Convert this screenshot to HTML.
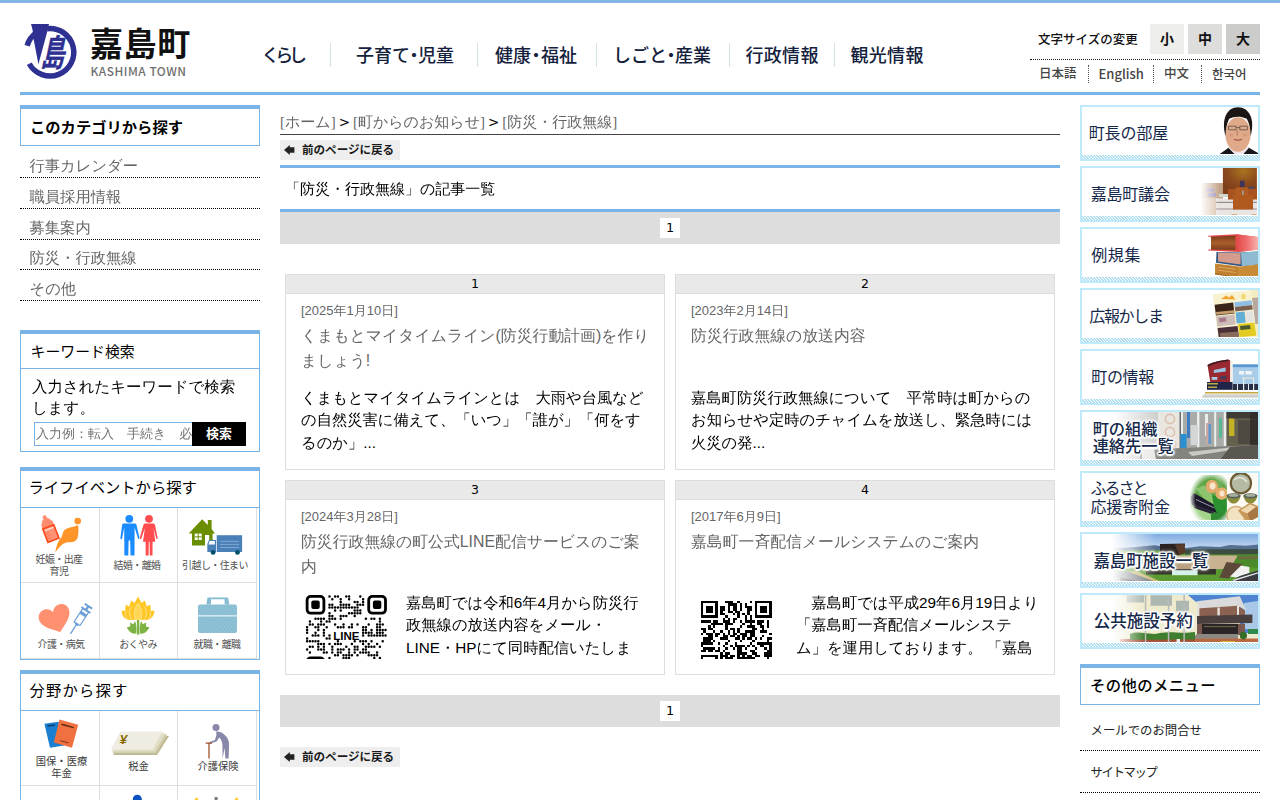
<!DOCTYPE html>
<html lang="ja">
<head>
<meta charset="utf-8">
<title>「防災・行政無線」の記事一覧 | 嘉島町</title>
<style>
*{box-sizing:border-box}
html,body{margin:0;padding:0;background:#fff}
body{width:1280px;height:800px;overflow:hidden;position:relative;color:#000;
 font-family:"DejaVu Sans","WenQuanYi Zen Hei",sans-serif;font-size:16px}
.abs{position:absolute}
.noto{font-family:"Liberation Sans","Noto Sans CJK JP",sans-serif}
.wqy{font-family:"Liberation Sans","WenQuanYi Zen Hei",sans-serif}
a{color:inherit;text-decoration:none}
#topbar{left:0;top:0;width:1280px;height:3px;background:#82b6e8}
#hline{left:20px;top:92px;width:1240px;height:3px;background:#7ab4e6}
/* header */
#sitename{left:90px;top:21px;font-size:33px;font-weight:700;line-height:48px;letter-spacing:0.6px;white-space:nowrap;color:#111}
#siteen{left:90.6px;top:62.8px;font-size:11.9px;line-height:16px;color:#707070;white-space:nowrap;letter-spacing:.5px}
.nav{top:42px;height:28px;line-height:28px;font-size:18px;color:#14213d;white-space:nowrap;font-weight:500}
.nsep{top:43px;width:1px;height:24px;background:#d3e3e3}
#fs-label{left:1038px;top:31px;font-size:12.5px;line-height:18px;white-space:nowrap;font-weight:500;color:#111}
.fsb{top:24px;width:34px;height:30px;line-height:31px;text-align:center;font-size:14px;font-weight:700;color:#111}
#fsdot{left:1030px;top:59px;width:230px;border-top:1px dotted #222}
.lang{top:65px;height:18px;line-height:18px;font-size:12.5px;color:#444;white-space:nowrap;font-weight:500}
.lsep{top:65px;height:18px;border-left:1px dotted #555}
/* boxes */
.box{border:1px solid #7ab4e6;border-top:4px solid #7ab4e6;background:#fff}
.boxtitle{font-size:15.3px;line-height:20px;white-space:nowrap;color:#000}
.sideitem{left:20px;width:240px;height:31px;border-bottom:1px dotted #000;color:#666;font-size:15.3px;line-height:20px;padding:9px 0 0 9.5px;white-space:nowrap}

.grid{left:21px;width:236px;height:151px;
 background:
  linear-gradient(#ddd,#ddd) 78px 0/1px 100% no-repeat,
  linear-gradient(#ddd,#ddd) 156px 0/1px 100% no-repeat,
  linear-gradient(#ddd,#ddd) 235px 0/1px 100% no-repeat,
  linear-gradient(#ddd,#ddd) 0 74px/236px 1px no-repeat,
  linear-gradient(#ddd,#ddd) 0 150px/236px 1px no-repeat}
.ilabel{font-size:10px;line-height:12px;color:#505050;font-weight:400;text-align:center;width:78px;white-space:nowrap;letter-spacing:-0.6px}
.ilabel2{font-size:10.3px;line-height:12px;color:#3a3a3a;font-weight:400;text-align:center;width:78px;white-space:nowrap}

.bc{font-family:"Liberation Serif","WenQuanYi Zen Hei",serif;font-size:15px;line-height:22px;color:#666;border-bottom:1px solid #444;white-space:nowrap}
.bc .gt{font-family:"DejaVu Sans",sans-serif;color:#000;font-size:13.5px;display:inline-block;width:17.2px;text-align:center;white-space:pre}
.backbtn{left:280px;width:120px;height:20px;background:#eee;font-size:11.55px;font-weight:700;line-height:20.6px;padding-left:22px;white-space:nowrap;color:#1a1a1a}
.pager{left:280px;width:780px;height:32px;background:#ddd}
.pager span{position:absolute;left:380px;top:6px;width:20px;height:20px;background:#fff;text-align:center;font-family:"DejaVu Sans",sans-serif;font-size:12.8px;line-height:20px}
.card{width:380px;border:1px solid #ddd;background:#fff;overflow:hidden}
.ch{position:absolute;left:0;top:0;width:378px;height:19px;background:#e9e9e9;border-bottom:1px solid #ddd;text-align:center;font-family:"DejaVu Sans",sans-serif;font-size:12.5px;line-height:17px}
.cd{position:absolute;left:15px;top:27.5px;font-size:13px;line-height:16px;color:#666;white-space:nowrap}
.ct{position:absolute;left:15px;top:49px;width:351px;font-size:15.85px;line-height:24.6px;color:#666}
.cb{position:absolute;left:15px;width:351px;font-size:15.3px;line-height:22.6px;color:#000;top:111.5px}

.bn{left:1080px;width:180px;height:56px;border:2px solid #bfeafb;background:#fff;overflow:hidden}
.bp{position:absolute;left:0;top:0}
.hatch{position:absolute;left:0;top:48px;width:176px;height:4px;background:repeating-linear-gradient(45deg,#b2dff0 0,#b2dff0 1.06px,#fff 1.06px,#fff 2.12px)}
.bt{position:absolute;font-family:"Liberation Sans","Noto Sans CJK JP",sans-serif;font-size:16px;line-height:20px;color:#16284a;white-space:nowrap;letter-spacing:-.1px}
.glow{text-shadow:1.5px 0 1px #fff,-1.5px 0 1px #fff,0 1.5px 1px #fff,0 -1.5px 1px #fff,1.2px 1.2px 1px #fff,-1.2px -1.2px 1px #fff,1.2px -1.2px 1px #fff,-1.2px 1.2px 1px #fff,0 0 3px #fff,0 0 4px #fff,0 0 5px #fff}
.om{left:1080px;width:180px;height:42px;border-bottom:1px dotted #000;font-size:12.4px;line-height:18px;color:#222;padding:13px 0 0 10.5px;white-space:nowrap}
</style>
</head>
<body>
<div id="topbar" class="abs"></div>

<!-- HEADER -->
<svg class="abs" style="left:0;top:0" width="100" height="92" viewBox="0 0 100 92">
 <path d="M 47.11 28.68 A 23.75 23.75 0 1 1 29.23 63.76" fill="none" stroke="#2e3192" stroke-width="5.5"/>
 <path d="M 27.17 45.70 A 23.75 23.75 0 0 1 36.72 32.56" fill="none" stroke="#2e3192" stroke-width="5.5"/>
 <path d="M31 23.9 L49 23.9 L47.3 31.5 L38.4 64.3 L33.4 38 L32.6 30 Z" fill="#2e3192"/>
 <text transform="translate(40.4 66.2) skewX(-12) scale(0.76 1.17)" font-family="'Liberation Sans','Noto Sans CJK JP',sans-serif" font-weight="700" font-size="31" fill="#2e3192" stroke="#2e3192" stroke-width=".35">島</text>
</svg>
<div id="sitename" class="abs noto">嘉島町</div>
<div id="siteen" class="abs" style="font-family:'Noto Sans CJK JP',sans-serif;font-weight:500">KASHIMA TOWN</div>

<div class="abs nav noto" style="left:261.5px;letter-spacing:-4.3px">くらし</div>
<div class="abs nsep" style="left:330px"></div>
<div class="abs nav noto" style="left:356px">子育て<span style="margin:0 -5px">・</span>児童</div>
<div class="abs nsep" style="left:477px"></div>
<div class="abs nav noto" style="left:495px">健康<span style="margin:0 -4px">・</span>福祉</div>
<div class="abs nsep" style="left:596px"></div>
<div class="abs nav noto" style="left:613px">しごと<span style="margin:0 -5px">・</span>産業</div>
<div class="abs nsep" style="left:729px"></div>
<div class="abs nav noto" style="left:745.5px;letter-spacing:.3px">行政情報</div>
<div class="abs nsep" style="left:834px"></div>
<div class="abs nav noto" style="left:850.5px;letter-spacing:.3px">観光情報</div>

<div id="fs-label" class="abs noto">文字サイズの変更</div>
<div class="abs fsb noto" style="left:1150px;background:#eeeeec">小</div>
<div class="abs fsb noto" style="left:1188px;background:#dddddb">中</div>
<div class="abs fsb noto" style="left:1226px;background:#ccccca">大</div>
<div id="fsdot" class="abs"></div>
<div class="abs lang noto" style="left:1039px">日本語</div>
<div class="abs lsep" style="left:1088px"></div>
<div class="abs lang" style="left:1098.5px;font-family:'Noto Sans CJK JP',sans-serif;font-size:13px">English</div>
<div class="abs lsep" style="left:1153px"></div>
<div class="abs lang noto" style="left:1164px">中文</div>
<div class="abs lsep" style="left:1201px"></div>
<div class="abs lang" style="left:1212px;font-family:'Noto Sans CJK KR','NanumGothic',sans-serif;font-size:12.5px">한국어</div>
<div id="hline" class="abs"></div>

<!-- LEFT -->
<!--LEFT-START-->
<div class="abs box" style="left:20px;top:105px;width:240px;height:41px"></div>
<div class="abs boxtitle noto" style="left:30px;top:117.5px;font-weight:700">このカテゴリから探す</div>
<div class="abs sideitem wqy" style="top:147px">行事カレンダー</div>
<div class="abs sideitem wqy" style="top:178px">職員採用情報</div>
<div class="abs sideitem wqy" style="top:209px">募集案内</div>
<div class="abs sideitem wqy" style="top:239px">防災・行政無線</div>
<div class="abs sideitem wqy" style="top:270px">その他</div>

<div class="abs box" style="left:20px;top:330px;width:240px;height:122px"></div>
<div class="abs" style="left:21px;top:368px;width:238px;height:1px;background:#7ab4e6"></div>
<div class="abs boxtitle noto" style="left:30.5px;top:341.5px;font-weight:400;font-size:14.9px">キーワード検索</div>
<div class="abs wqy" style="left:32px;top:376px;width:215px;font-size:15.45px;line-height:21px">入力されたキーワードで検索します。</div>
<div class="abs wqy" style="left:34px;top:422px;width:159px;height:24px;border:1px solid #7ab4e6;font-size:13px;line-height:22px;color:#707070;padding-left:1px;white-space:nowrap;overflow:hidden">入力例：転入　手続き　必要なもの</div>
<div class="abs noto" style="left:192px;top:422px;width:54px;height:24px;background:#000;color:#fff;font-size:13px;font-weight:700;line-height:23px;text-align:center">検索</div>

<div class="abs box" style="left:20px;top:467px;width:240px;height:193px"></div>
<div class="abs" style="left:21px;top:507px;width:238px;height:1px;background:#7ab4e6"></div>
<div class="abs boxtitle noto" style="left:28.5px;top:478px;font-weight:400">ライフイベントから探す</div>
<div class="abs grid" style="top:508px"></div>
<svg class="abs" style="left:21px;top:508px" width="236" height="150" viewBox="21 508 236 150">
 <!-- bottle -->
 <g transform="rotate(-21 49.5 530)">
  <circle cx="49.5" cy="516.6" r="2.1" fill="#ff8c6e"/>
  <path d="M46.8 518 L52.2 518 L55.6 523 L55.6 526.6 L43.4 526.6 L43.4 523 Z" fill="#ff8c6e"/>
  <rect x="43.6" y="526.6" width="11.8" height="14.4" fill="#ff9175" stroke="#ff4a1a" stroke-width="1.6"/>
  <rect x="45" y="528.2" width="9" height="1.5" fill="#ffe3da"/>
  <path d="M45 532.5h3M45 535h3M45 537.5h3" stroke="#ff6a40" stroke-width=".7"/>
 </g>
 <!-- swirl -->
 <circle cx="77.7" cy="521.1" r="3.3" fill="#ff9428"/>
 <path d="M76.3 525.6 L78.3 525.8 C78.6 530 78.6 534 77.4 538.5 C76 541.5 72.5 542.5 69.5 542.3 C64.5 542.2 61.5 544 55.2 552.6 C56.2 547 57.6 542.5 59.4 539.8 C60.8 538 62 537 62.2 535.3 C62.8 532 64 530 66.2 528.8 C69 527.3 72.5 527.8 76.3 525.6 Z" fill="#ff9428"/>
 <!-- man -->
 <g fill="#1a8cff">
  <circle cx="129.3" cy="518.8" r="3.9"/>
  <path d="M123.2 523.5 L135.4 523.5 L136.4 524.6 L139.6 538.4 L138.2 539 L134.6 527.5 L134.5 555.4 L130.5 555.4 L130.2 540.5 L128.6 540.5 L128.3 555.4 L124.4 555.4 L124.2 527.5 L121.9 539.2 L120.3 538.8 L122.2 524.6 Z"/>
 </g>
 <!-- woman -->
 <g fill="#ff4d4f">
  <circle cx="149" cy="518.8" r="3.9"/>
  <path d="M144.6 523.5 L153.8 523.5 L154.9 524.6 L157.8 538.6 L156.4 539.1 L153.5 528 L155.3 541.8 L152.6 541.8 L152.5 555.4 L149.8 555.4 L149.6 541.8 L148.8 541.8 L148.6 555.4 L145.7 555.4 L145.6 541.8 L143 541.8 L144.9 528 L141.2 539 L139.7 538.4 L143.5 524.6 Z"/>
 </g>
 <!-- house -->
 <g fill="#6b8e00">
  <path d="M202.2 519.2 L207.8 524.9 L207.8 520 L211.6 520 L211.6 528.9 L215 533.4 L212.6 533.4 L212.6 545.4 L209.2 545.4 L209.2 535 L205 535 L205 545.4 L192 545.4 L192 533.4 L188.7 533.4 Z"/>
 </g>
 <rect x="194.7" y="533.6" width="7" height="6.4" fill="#fff"/>
 <path d="M198.2 533.6v6.4M194.7 536.8h7" stroke="#6b8e00" stroke-width="1"/>
 <!-- truck -->
 <rect x="216.7" y="535.2" width="25.4" height="16.8" fill="#4a80b8"/>
 <path d="M209 540 L216 540 L216 552 L207.3 552 L207.3 544 Z" fill="#4a80b8"/>
 <path d="M209.6 540.9 L214.8 540.9 L214.8 544.6 L208.5 544.6 Z" fill="#fff"/>
 <path d="M220 541.3h19M220 544.4h19M220 547.5h19" stroke="#8fb3d9" stroke-width=".8"/>
 <circle cx="213.1" cy="552.4" r="2.4" fill="#00506a"/><circle cx="237.5" cy="552.4" r="2.4" fill="#00506a"/>
 <!-- heart -->
 <path transform="translate(55.8 619.6) rotate(-20) scale(1.02 .98)" d="M0 13.6 C-5 9 -15.5 3 -15.5 -5 C-15.5 -10.5 -11.5 -13.5 -7.6 -13.5 C-4 -13.5 -1.2 -11 0 -8.2 C1.2 -11 4 -13.5 7.6 -13.5 C11.5 -13.5 15.5 -10.5 15.5 -5 C15.5 3 5 9 0 13.6 Z" fill="#ff9070"/>
 <!-- syringe -->
 <g transform="translate(79.7 619.6) rotate(33)" stroke="#6b9fd8" fill="none">
  <path d="M-4.4 -16h8.8" stroke-width="2"/>
  <path d="M0 -15.5v4" stroke-width="2.4"/>
  <path d="M-5.4 -11.4h10.8" stroke-width="1.8"/>
  <rect x="-3.5" y="-10.8" width="7" height="15.6" stroke-width="1.2" fill="#fff"/>
  <rect x="-3.5" y="-8.2" width="7" height="3.2" fill="#6b9fd8" stroke="none"/>
  <path d="M-2 4.8h4v1.8h-4z" fill="#6b9fd8" stroke="none"/>
  <path d="M0 6.4v10.6" stroke-width="1.3"/>
 </g>
 <!-- lotus -->
 <g>
  <path d="M138 596.5 L141.5 603 L145 600.5 L146.6 606.5 L150.3 604.5 L150.8 611 L154.3 610.5 C154.6 616 151 619.8 146 620 L130 620 C125 619.8 121.4 616 121.7 610.5 L125.2 611 L125.7 604.5 L129.4 606.5 L131 600.5 L134.5 603 Z" fill="#ffc726"/>
  <path d="M138 603 C142 608 142.6 615 140.8 620 L135.2 620 C133.4 615 134 608 138 603 Z" fill="#ffd655" stroke="#fff3c4" stroke-width=".5"/>
  <path d="M131.3 607 C128.5 612 129.5 617 132.3 620 M144.7 607 C147.5 612 146.5 617 143.7 620 M126 611.5 C124.8 615 126 618 128 619.6 M150 611.5 C151.2 615 150 618 148 619.6" stroke="#fff3c4" stroke-width=".6" fill="none"/>
  <rect x="136.9" y="620" width="2.4" height="14.6" fill="#7cb342"/>
  <path d="M136.3 633.6 C131 634.5 128.5 630.5 126.7 627.3 L130.3 626.6 L130 622.5 L133.4 624.3 L135 621 C136.6 624.5 136.8 629 136.3 633.6 Z M139.9 633.6 C145.2 634.5 147.7 630.5 149.5 627.3 L145.9 626.6 L146.2 622.5 L142.8 624.3 L141.2 621 C139.6 624.5 139.4 629 139.9 633.6 Z" fill="#7cb342"/>
 </g>
 <!-- briefcase -->
 <path d="M207.5 597.4 L228 597.4 L229.4 604.6 L224.6 604.6 L224.6 599.3 L211 599.3 L211 604.6 L206.3 604.6 Z" fill="#86bcd1"/>
 <defs><pattern id="bh" width="2.6" height="2.6" patternUnits="userSpaceOnUse" patternTransform="rotate(-55)"><rect width="2.6" height="2.6" fill="#86bcd1"/><rect width="2.6" height=".7" fill="#9cc9da"/></pattern></defs>
 <rect x="198" y="604.5" width="39" height="28.6" rx="2" fill="url(#bh)"/>
 <path d="M198 615.9h39" stroke="#fff" stroke-width="1"/>
</svg>
<div class="abs ilabel noto" style="left:20px;top:553.5px">妊娠・出産<br>育児</div>
<div class="abs ilabel noto" style="left:98px;top:559.5px">結婚・離婚</div>
<div class="abs ilabel noto" style="left:176px;top:559.5px">引越し・住まい</div>
<div class="abs ilabel noto" style="left:22px;top:638.5px">介護・病気</div>
<div class="abs ilabel noto" style="left:99px;top:638.5px">おくやみ</div>
<div class="abs ilabel noto" style="left:178px;top:638.5px">就職・離職</div>

<div class="abs box" style="left:20px;top:670px;width:240px;height:140px;border-bottom:0"></div>
<div class="abs" style="left:21px;top:710px;width:238px;height:1px;background:#7ab4e6"></div>
<div class="abs boxtitle noto" style="left:29.5px;top:681px;font-weight:400;letter-spacing:1.2px">分野から探す</div>
<div class="abs grid" style="top:711px"></div>
<svg class="abs" style="left:21px;top:711px" width="236" height="89" viewBox="21 711 236 89">
 <path d="M44.4 723.8 L58.6 721.8 L64 745.6 L50 747.8 Z" fill="#1a7fd0"/>
 <path d="M59.4 719.6 L78.2 724.7 L72 747.8 L53.8 742.6 Z" fill="#f07040"/>
 <path d="M61.5 724.3 L73.6 727.6" stroke="#5a2a10" stroke-width="1.5"/>
 <path d="M60.2 740.6 L68.6 742.9" stroke="#7a3a18" stroke-width="1"/>
 <path d="M47.5 726 L55 725" stroke="#0a3f70" stroke-width="1.4"/>
 <!-- money -->
 <path d="M124 736 L169 736 L157 755 L113 755 Z" fill="#bdb88f"/>
 <path d="M123 734.5 L167.5 734.5 L156 753.2 L112.5 753.2 Z" fill="#d3cfae"/>
 <path d="M122 733 L165.5 733 L154.6 751.6 L111.6 751.6 Z" fill="#e2dfc8"/>
 <path d="M120.4 731.4 L162.5 731.4 L152.4 749.8 L110.8 749.8 Z" fill="#efece2"/>
 <text x="119.5" y="744" font-family="'Liberation Sans',sans-serif" font-weight="700" font-style="italic" font-size="13.5" fill="#8a6a00">¥</text>
 <!-- elderly -->
 <g fill="#8888aa">
  <circle cx="216" cy="727.4" r="3.5"/>
  <path d="M216.2 731.6 C219.5 731 224 733 227 737.5 C229.2 740.8 229.2 744 229 747 L228.6 758.6 L225.4 758.6 L224.6 748 L222.6 758.6 L222.4 744.5 C222.2 741.5 221 739 219.2 737.4 L216.6 741.6 L210 743.4 L209.6 742 L215 740 L216.4 735 Z"/>
 </g>
 <path d="M205.7 743.1h6.3" stroke="#a0522d" stroke-width="1.3"/>
 <path d="M209 743v15.5" stroke="#a0522d" stroke-width="1.3"/>
 <!-- row2 hints -->
 <circle cx="137.3" cy="799.2" r="4.5" fill="#0a50c0"/>
 <path d="M194.5 800 L196.5 797 L198.5 800 Z M234.6 800 L236.6 797 L238.6 800 Z" fill="#ffc726"/>
 <rect x="214.6" y="797" width="3" height="3" fill="#777"/>
</svg>
<div class="abs ilabel2 noto" style="left:22.5px;top:755.5px">国保・医療<br>年金</div>
<div class="abs ilabel2 noto" style="left:99.5px;top:760.5px">税金</div>
<div class="abs ilabel2 noto" style="left:179px;top:760.5px">介護保険</div>
<!--LEFT-END-->

<!-- MAIN -->
<!--MAIN-START-->
<div class="abs bc" style="left:280px;top:111px;width:780px;height:24px">[ホーム]<span class="gt">&gt;</span>[町からのお知らせ]<span class="gt">&gt;</span>[防災・行政無線]</div>
<div class="abs backbtn noto" style="top:140px"><svg width="11" height="10" viewBox="0 0 11 10" style="position:absolute;left:4.4px;top:5px"><path d="M0 5 L5.8 0 L5.8 2.2 L10.4 2.2 L10.4 7.8 L5.8 7.8 L5.8 10 Z" fill="#222"/></svg>前のページに戻る</div>
<div class="abs" style="left:280px;top:165px;width:780px;height:3px;background:#7ab4e6"></div>
<div class="abs wqy" style="left:285px;top:179px;font-size:15px;line-height:20px;white-space:nowrap">「防災・行政無線」の記事一覧</div>
<div class="abs" style="left:280px;top:209px;width:780px;height:3px;background:#7ab4e6"></div>
<div class="abs pager" style="top:212px"><span>1</span></div>

<div class="abs card" style="left:285px;top:274px;height:196px"><div class="ch">1</div>
 <div class="cd wqy">[2025年1月10日]</div>
 <div class="ct wqy">くまもとマイタイムライン(防災行動計画)を作りましょう!</div>
 <div class="cb wqy">くまもとマイタイムラインとは　大雨や台風などの自然災害に備えて、「いつ」「誰が」「何をするのか」...</div>
</div>
<div class="abs card" style="left:675px;top:274px;height:196px"><div class="ch">2</div>
 <div class="cd wqy">[2023年2月14日]</div>
 <div class="ct wqy">防災行政無線の放送内容</div>
 <div class="cb wqy">嘉島町防災行政無線について　平常時は町からのお知らせや定時のチャイムを放送し、緊急時には火災の発...</div>
</div>
<div class="abs card" style="left:285px;top:480px;height:195px"><div class="ch">3</div>
 <div class="cd wqy">[2024年3月28日]</div>
 <div class="ct wqy">防災行政無線の町公式LINE配信サービスのご案内</div>
 <svg style="position:absolute;left:19px;top:114px" width="83" height="64" viewBox="-0.7 0 83 64"><path d="M23.8 1.4h0M29.4 1.4h0M32.2 1.4h0M40.6 1.4h0M43.4 1.4h0M54.6 1.4h0M26.6 4.2h0M35 4.2h0M43.4 4.2h0M57.4 4.2h0M35 7h0M49 7h0M51.8 7h0M57.4 7h0M23.8 9.8h0M26.6 9.8h0M35 9.8h0M37.8 9.8h0M40.6 9.8h0M43.4 9.8h0M51.8 9.8h0M54.6 9.8h0M57.4 9.8h0M23.8 12.6h0M26.6 12.6h0M29.4 12.6h0M32.2 12.6h0M35 12.6h0M37.8 12.6h0M40.6 12.6h0M43.4 12.6h0M46.2 12.6h0M49 12.6h0M51.8 12.6h0M29.4 15.4h0M35 15.4h0M49 15.4h0M51.8 15.4h0M54.6 15.4h0M23.8 18.2h0M43.4 18.2h0M46.2 18.2h0M49 18.2h0M51.8 18.2h0M54.6 18.2h0M23.8 21h0M26.6 21h0M35 21h0M37.8 21h0M40.6 21h0M49 21h0M9.8 23.8h0M12.6 23.8h0M15.4 23.8h0M18.2 23.8h0M23.8 23.8h0M26.6 23.8h0M29.4 23.8h0M35 23.8h0M60.2 23.8h0M65.8 23.8h0M68.6 23.8h0M74.2 23.8h0M4.2 26.6h0M15.4 26.6h0M21 26.6h0M23.8 26.6h0M74.2 26.6h0M4.2 29.4h0M7 29.4h0M12.6 29.4h0M15.4 29.4h0M18.2 29.4h0M29.4 29.4h0M37.8 29.4h0M46.2 29.4h0M51.8 29.4h0M63 29.4h0M71.4 29.4h0M74.2 29.4h0M77 29.4h0M1.4 32.2h0M9.8 32.2h0M12.6 32.2h0M21 32.2h0M32.2 32.2h0M35 32.2h0M37.8 32.2h0M43.4 32.2h0M46.2 32.2h0M57.4 32.2h0M60.2 32.2h0M71.4 32.2h0M74.2 32.2h0M1.4 35h0M12.6 35h0M18.2 35h0M57.4 35h0M60.2 35h0M65.8 35h0M71.4 35h0M74.2 35h0M77 35h0M79.8 35h0M1.4 37.8h0M9.8 37.8h0M18.2 37.8h0M57.4 37.8h0M60.2 37.8h0M63 37.8h0M65.8 37.8h0M71.4 37.8h0M74.2 37.8h0M77 37.8h0M7 40.6h0M9.8 40.6h0M12.6 40.6h0M18.2 40.6h0M23.8 40.6h0M57.4 40.6h0M63 40.6h0M65.8 40.6h0M68.6 40.6h0M71.4 40.6h0M74.2 40.6h0M77 40.6h0M79.8 40.6h0M1.4 43.4h0M21 43.4h0M23.8 43.4h0M1.4 46.2h0M4.2 46.2h0M7 46.2h0M9.8 46.2h0M12.6 46.2h0M32.2 46.2h0M49 46.2h0M54.6 46.2h0M57.4 46.2h0M60.2 46.2h0M65.8 46.2h0M77 46.2h0M12.6 49h0M15.4 49h0M18.2 49h0M23.8 49h0M29.4 49h0M32.2 49h0M35 49h0M46.2 49h0M57.4 49h0M63 49h0M71.4 49h0M4.2 51.8h0M7 51.8h0M12.6 51.8h0M18.2 51.8h0M26.6 51.8h0M40.6 51.8h0M49 51.8h0M51.8 51.8h0M60.2 51.8h0M63 51.8h0M65.8 51.8h0M68.6 51.8h0M74.2 51.8h0M1.4 54.6h0M12.6 54.6h0M15.4 54.6h0M18.2 54.6h0M26.6 54.6h0M32.2 54.6h0M35 54.6h0M37.8 54.6h0M43.4 54.6h0M49 54.6h0M51.8 54.6h0M57.4 54.6h0M60.2 54.6h0M4.2 57.4h0M18.2 57.4h0M21 57.4h0M26.6 57.4h0M32.2 57.4h0M35 57.4h0M43.4 57.4h0M49 57.4h0M54.6 57.4h0M57.4 57.4h0M60.2 57.4h0M63 57.4h0M71.4 57.4h0M29.4 60.2h0M32.2 60.2h0M37.8 60.2h0M40.6 60.2h0M43.4 60.2h0M46.2 60.2h0M51.8 60.2h0M63 60.2h0M65.8 60.2h0M68.6 60.2h0M71.4 60.2h0M23.8 63h0M37.8 63h0M40.6 63h0M43.4 63h0M68.6 63h0M74.2 63h0M26.6 65.8h0M29.4 65.8h0M35 65.8h0M37.8 65.8h0M54.6 65.8h0M57.4 65.8h0M65.8 65.8h0M68.6 65.8h0M79.8 65.8h0M32.2 68.6h0M37.8 68.6h0M43.4 68.6h0M46.2 68.6h0M51.8 68.6h0M60.2 68.6h0M63 68.6h0M65.8 68.6h0M74.2 68.6h0M77 68.6h0M79.8 68.6h0M29.4 71.4h0M32.2 71.4h0M40.6 71.4h0M46.2 71.4h0M49 71.4h0M51.8 71.4h0M54.6 71.4h0M57.4 71.4h0M60.2 71.4h0M63 71.4h0M68.6 71.4h0M74.2 71.4h0M77 71.4h0M26.6 74.2h0M29.4 74.2h0M37.8 74.2h0M40.6 74.2h0M43.4 74.2h0M49 74.2h0M57.4 74.2h0M60.2 74.2h0M68.6 74.2h0M74.2 74.2h0M77 74.2h0M79.8 74.2h0M26.6 77h0M29.4 77h0M40.6 77h0M57.4 77h0M60.2 77h0M63 77h0M68.6 77h0M71.4 77h0M77 77h0M79.8 77h0M23.8 79.8h0M35 79.8h0M37.8 79.8h0M54.6 79.8h0M60.2 79.8h0M65.8 79.8h0M71.4 79.8h0M74.2 79.8h0M77 79.8h0M79.8 79.8h0" stroke="#000" stroke-width="2.5" stroke-linecap="round" fill="none"/><rect x="1.4" y="1.4" width="16.8" height="16.8" rx="3.6" fill="none" stroke="#000" stroke-width="2.8"/><rect x="5.6" y="5.6" width="8.4" height="8.4" rx="2" fill="#000"/><rect x="63.0" y="1.4" width="16.8" height="16.8" rx="3.6" fill="none" stroke="#000" stroke-width="2.8"/><rect x="67.2" y="5.6" width="8.4" height="8.4" rx="2" fill="#000"/><rect x="1.4" y="63.0" width="16.8" height="16.8" rx="3.6" fill="none" stroke="#000" stroke-width="2.8"/><rect x="5.6" y="67.2" width="8.4" height="8.4" rx="2" fill="#000"/><text x="40.6" y="45.2" text-anchor="middle" font-family="'Liberation Sans',sans-serif" font-weight="700" font-size="11.5" fill="#000">LINE</text></svg>
 <div class="cb wqy" style="left:120px;width:246px;top:110.5px">嘉島町では令和6年4月から防災行政無線の放送内容をメール・LINE・HPにて同時配信いたしま</div>
</div>
<div class="abs card" style="left:675px;top:480px;height:195px"><div class="ch">4</div>
 <div class="cd wqy">[2017年6月9日]</div>
 <div class="ct wqy">嘉島町一斉配信メールシステムのご案内</div>
 <svg style="position:absolute;left:24px;top:119px" width="72" height="59" viewBox="-0.75 -0.75 72 59" shape-rendering="crispEdges"><path d="M24.48 1.22h7.34M36.72 1.22h2.45M48.97 1.22h2.45M26.93 3.67h9.79M39.17 3.67h2.45M44.07 3.67h2.45M19.59 6.12h4.9M26.93 6.12h2.45M31.83 6.12h4.9M39.17 6.12h2.45M44.07 6.12h7.34M19.59 8.57h4.9M26.93 8.57h2.45M31.83 8.57h4.9M39.17 8.57h2.45M46.52 8.57h4.9M19.59 11.02h2.45M26.93 11.02h4.9M34.28 11.02h4.9M46.52 11.02h2.45M19.59 13.47h4.9M31.83 13.47h2.45M36.72 13.47h2.45M41.62 13.47h2.45M46.52 13.47h2.45M24.48 15.91h2.45M36.72 15.91h2.45M44.07 15.91h2.45M48.97 15.91h2.45M22.03 18.36h2.45M26.93 18.36h2.45M31.83 18.36h4.9M44.07 18.36h2.45M48.97 18.36h2.45M0 20.81h9.79M12.24 20.81h4.9M22.03 20.81h7.34M31.83 20.81h2.45M39.17 20.81h2.45M44.07 20.81h9.79M56.31 20.81h7.34M66.1 20.81h2.45M9.79 23.26h12.24M24.48 23.26h7.34M41.62 23.26h2.45M48.97 23.26h2.45M56.31 23.26h4.9M66.1 23.26h2.45M7.34 25.71h2.45M12.24 25.71h2.45M24.48 25.71h2.45M39.17 25.71h2.45M46.52 25.71h7.34M58.76 25.71h4.9M66.1 25.71h2.45M0 28.16h4.9M7.34 28.16h4.9M24.48 28.16h2.45M29.38 28.16h4.9M36.72 28.16h2.45M51.41 28.16h4.9M61.21 28.16h2.45M2.45 30.6h2.45M12.24 30.6h2.45M19.59 30.6h2.45M26.93 30.6h2.45M31.83 30.6h2.45M36.72 30.6h2.45M44.07 30.6h9.79M58.76 30.6h7.34M0 33.05h2.45M4.9 33.05h7.34M14.69 33.05h4.9M22.03 33.05h2.45M26.93 33.05h2.45M31.83 33.05h4.9M39.17 33.05h7.34M48.97 33.05h4.9M68.55 33.05h2.45M7.34 35.5h4.9M14.69 35.5h2.45M22.03 35.5h4.9M29.38 35.5h4.9M36.72 35.5h2.45M41.62 35.5h4.9M48.97 35.5h4.9M61.21 35.5h2.45M2.45 37.95h9.79M19.59 37.95h7.34M34.28 37.95h4.9M41.62 37.95h2.45M46.52 37.95h4.9M53.86 37.95h2.45M58.76 37.95h2.45M66.1 37.95h4.9M2.45 40.4h7.34M12.24 40.4h2.45M26.93 40.4h2.45M39.17 40.4h2.45M51.41 40.4h2.45M66.1 40.4h2.45M0 42.84h12.24M17.14 42.84h2.45M24.48 42.84h2.45M34.28 42.84h2.45M48.97 42.84h2.45M56.31 42.84h14.69M0 45.29h2.45M22.03 45.29h2.45M29.38 45.29h2.45M34.28 45.29h9.79M46.52 45.29h2.45M51.41 45.29h2.45M58.76 45.29h4.9M68.55 45.29h2.45M2.45 47.74h12.24M17.14 47.74h2.45M24.48 47.74h2.45M31.83 47.74h2.45M36.72 47.74h4.9M44.07 47.74h2.45M53.86 47.74h2.45M63.66 47.74h2.45M68.55 47.74h2.45M0 50.19h4.9M7.34 50.19h4.9M14.69 50.19h4.9M22.03 50.19h2.45M36.72 50.19h4.9M48.97 50.19h4.9M66.1 50.19h4.9M19.59 52.64h2.45M24.48 52.64h4.9M36.72 52.64h9.79M51.41 52.64h4.9M63.66 52.64h7.34M19.59 55.09h7.34M29.38 55.09h4.9M36.72 55.09h2.45M41.62 55.09h2.45M46.52 55.09h4.9M53.86 55.09h4.9M63.66 55.09h7.34M19.59 57.53h2.45M24.48 57.53h7.34M36.72 57.53h17.14M66.1 57.53h2.45M22.03 59.98h2.45M29.38 59.98h4.9M39.17 59.98h2.45M44.07 59.98h2.45M51.41 59.98h4.9M63.66 59.98h4.9M44.07 62.43h7.34M56.31 62.43h12.24M24.48 64.88h12.24M41.62 64.88h9.79M53.86 64.88h2.45M61.21 64.88h4.9M19.59 67.33h2.45M26.93 67.33h2.45M34.28 67.33h9.79M51.41 67.33h9.79M19.59 69.78h4.9M26.93 69.78h7.34M41.62 69.78h2.45M46.52 69.78h2.45M51.41 69.78h2.45M56.31 69.78h2.45M63.66 69.78h2.45M68.55 69.78h2.45" stroke="#000" stroke-width="2.45" fill="none"/><rect x="1.22" y="1.22" width="14.69" height="14.69" fill="none" stroke="#000" stroke-width="2.45"/><rect x="4.90" y="4.90" width="7.34" height="7.34" fill="#000"/><rect x="55.09" y="1.22" width="14.69" height="14.69" fill="none" stroke="#000" stroke-width="2.45"/><rect x="58.76" y="4.90" width="7.34" height="7.34" fill="#000"/><rect x="1.22" y="55.09" width="14.69" height="14.69" fill="none" stroke="#000" stroke-width="2.45"/><rect x="4.90" y="58.76" width="7.34" height="7.34" fill="#000"/></svg>
 <div class="cb wqy" style="left:120px;width:246px;top:110.5px">　嘉島町では平成29年6月19日より「嘉島町一斉配信メールシステム」を運用しております。 「嘉島</div>
</div>

<div class="abs pager" style="top:695px"><span>1</span></div>
<div class="abs backbtn noto" style="top:747px"><svg width="11" height="10" viewBox="0 0 11 10" style="position:absolute;left:4.4px;top:5px"><path d="M0 5 L5.8 0 L5.8 2.2 L10.4 2.2 L10.4 7.8 L5.8 7.8 L5.8 10 Z" fill="#222"/></svg>前のページに戻る</div>
<!--MAIN-END-->

<!-- RIGHT -->
<!--RIGHT-START-->
<div class="abs bn" style="top:105px"><svg class="bp" width="176" height="47" viewBox="2 2 176 47">
<path d="M139 49.5 L149 42.5 L158 47 L168.5 42.5 L178 48 L178 49.5 Z" fill="#16161a"/>
<path d="M148.5 43 L153 39 L164 39 L168.8 43 L163 49.5 L155 49.5 Z" fill="#f3e6ea"/>
<ellipse cx="158" cy="29.5" rx="12.6" ry="17.3" fill="#dfa98a"/>
<path d="M145.6 31 C141 14 147 2.2 158 2.2 C169 2.2 175.5 14 170.6 31 C170.6 24 169.4 18.5 166.8 13.8 C161 11 154 11.2 149.2 13.8 C146.8 18.5 145.6 24 145.6 31 Z" fill="#1b1613"/>
<path d="M148.6 21.2 h7.6 v3.6 h-7.6 z M159.8 21.2 h7.6 v3.6 h-7.6 z" fill="none" stroke="#5e4e46" stroke-width=".8"/>
<path d="M156.2 22.6h3.6" stroke="#5e4e46" stroke-width=".8"/>
<path d="M154 34.2 q4 1.8 8 0" stroke="#9c4f46" stroke-width="1.2" fill="none"/>
<path d="M157.4 25v5.6" stroke="#c08a6c" stroke-width="1.6"/>
<ellipse cx="151" cy="30" rx="2.2" ry="1.6" fill="#d69a7c"/><ellipse cx="165" cy="30" rx="2.2" ry="1.6" fill="#d69a7c"/></svg><div class="hatch"></div><div class="bt" style="left:6.7px;top:17px">町長の部屋</div></div>
<div class="abs bn" style="top:166px"><svg class="bp" width="176" height="47" viewBox="2 2 176 47">
<defs><linearGradient id="g2" x1="0" x2="1"><stop offset="0" stop-color="#fff"/><stop offset=".04" stop-color="#fff"/><stop offset=".36" stop-color="#fff" stop-opacity="0"/></linearGradient>
<radialGradient id="w2" cx=".6" cy=".1" r=".8"><stop offset="0" stop-color="#a9741f"/><stop offset=".6" stop-color="#8c4a1e"/><stop offset="1" stop-color="#7d3f1a"/></radialGradient></defs>
<rect x="118" y="17" width="25" height="33" fill="#c4a58c"/>
<rect x="118" y="32" width="20" height="18" fill="#d9c3ad"/>
<path d="M126 22.5h8v3h-8z M128 27h8v3.4h-8z" fill="#9a90c0"/>
<rect x="142.9" y="2" width="34" height="27" fill="url(#w2)"/>
<rect x="136" y="32.5" width="41" height="17.5" fill="#e9e5e2"/>
<path d="M136 36.4h41M136 43h41" stroke="#9a8f8c" stroke-width="1.2"/>
<rect x="139" y="28" width="9" height="3" fill="#cfd6cc"/>
<rect x="148" y="23" width="29" height="10.5" fill="#a8531f"/>
<rect x="155.5" y="21.5" width="12.5" height="8" fill="#b35c22"/>
<rect x="153" y="28.7" width="20" height="14.8" fill="#b15a20"/>
<rect x="160" y="14.7" width="4.6" height="6.3" fill="#3e3558"/>
<rect x="169" y="20.5" width="5" height="2.4" fill="#4a4a6a"/>
<rect x="162" y="24.5" width="1.6" height="4.5" fill="#9aa0a0"/>
<path d="M151.5 48.6h5.5v1.4h-5.5z M171.5 48.6h5v1.4h-5z" fill="#c8781c"/>
<rect x="118" y="2" width="60" height="48" fill="url(#g2)"/></svg><div class="hatch"></div><div class="bt" style="left:8.7px;top:17px;letter-spacing:-.2px">嘉島町議会</div></div>
<div class="abs bn" style="top:227px"><svg class="bp" width="176" height="47" viewBox="2 2 176 47">
<defs><linearGradient id="r3" x1="0" x2="1"><stop offset="0" stop-color="#e04848"/><stop offset=".5" stop-color="#f07070"/><stop offset="1" stop-color="#f6b4b0"/></linearGradient>
<linearGradient id="p3" x1="0" x2="0" y1="0" y2="1"><stop offset="0" stop-color="#7a3c1c"/><stop offset=".5" stop-color="#aa5e2c"/><stop offset="1" stop-color="#7a3c1c"/></linearGradient></defs>
<path d="M128.2 8.7 L156.2 7.3 L178 10 L178 22.5 L159 24.9 L128.2 23.5 L128.2 22.6 L131 22.6 L131 9.8 L128.2 9.8 Z" fill="#e04a4a"/>
<path d="M156.2 7.3 L178 10 L178 22.5 L159 24.9 Z" fill="url(#r3)"/>
<path d="M131 9.8 L155.4 8.8 L155.4 23 L131 22.6 Z" fill="url(#p3)"/>
<path d="M136.5 25 L161 25.6 L178 24.6 L178 37.4 L161 39.2 L136 35.8 Z" fill="#2f5684"/>
<path d="M161 25.6 L178 24.6 L178 37.4 L161.8 39.2 Z" fill="#8fbbd2"/>
<path d="M138 25.6 L160.6 26.2 L160.6 37.6 L138 34.6 Z" fill="#d39c8c"/>
<path d="M135 36.4 L160 39.6 L178 37.6 L178 49.6 L150 49.6 L135 47 Z" fill="#c98c36"/>
<path d="M137 37.8 L158 40.4 L158 49 L137 46.4 Z" fill="#c07e30"/>
<path d="M138 40 L156 42.4 M138 43 L156 45.6" stroke="#dca860" stroke-width="1"/>
<path d="M135 46 L150 48.8 L150 49.6 L135 47.4 Z" fill="#a56a22"/></svg><div class="hatch"></div><div class="bt" style="left:9.2px;top:17px;letter-spacing:.6px">例規集</div></div>
<div class="abs bn" style="top:288px"><svg class="bp" width="176" height="47" viewBox="2 2 176 47">
<path d="M170 2 L178 2 L178 50 L172 50 Z" fill="#f3ecc0"/>
<path d="M172 10 L178 9.6 L178 36 L174 36 Z" fill="#b8a8a0"/>
<path d="M132.7 6.3 L170.9 2.1 L177.2 49.6 L138 50 Z" fill="#f8f2d0"/>
<path d="M141 11 L146 7.5 L149 9.5 L152 7 L155.5 11.4 Z" fill="#f0a830"/>
<ellipse cx="163.5" cy="8.4" rx="2.2" ry="3" fill="#f2d870"/>
<path d="M134.6 16.8 L153.2 14.6 L154.4 25.6 L136 27.6 Z" fill="#3a2418"/>
<path d="M136 24 L154.2 22.2 L154.4 25 L136.2 26.8 Z" fill="#c8a070"/>
<path d="M154.4 14.2 L171.6 12.2 L172.2 17 L154.8 19 Z" fill="#8fbfe6"/>
<path d="M154.8 19 L172.2 17 L172.8 21.6 L155.4 23.6 Z" fill="#7a6052"/>
<path d="M136.2 28.6 L154.6 26.6 L155.6 36.6 L137.4 38.4 Z" fill="#cdbcb8"/>
<path d="M139 30 L146 29.4 L146.4 33.6 L139.4 34.2 Z" fill="#a87888"/>
<path d="M155.6 24.6 L164.6 23.6 L165.8 34.4 L156.6 35.4 Z" fill="#62aed6"/>
<path d="M165.6 23.6 L172.8 22.8 L174 33.6 L166.8 34.4 Z" fill="#e4e2e0"/>
<path d="M137.6 40 L157.6 38 L158.8 48.8 L138.8 50 Z" fill="#4a3038"/>
<path d="M140 45 L158.4 43.4 L158.8 48.8 L140.4 50 Z" fill="#8a6a58"/>
<path d="M158 36 L174.4 34.4 L176.4 47.8 L159.4 49 Z" fill="#e2cc24"/>
<path d="M160 38 L170 37 L170.6 41 L160.4 42 Z" fill="#4a5a30"/></svg><div class="hatch"></div><div class="bt" style="left:7.2px;top:17px;letter-spacing:-1.3px">広報かしま</div></div>
<div class="abs bn" style="top:349px"><svg class="bp" width="176" height="47" viewBox="2 2 176 47">
<path d="M124 45 L178 45 L178 50 L121.5 50 Z" fill="#dcded8"/>
<path d="M122.5 47h55.5" stroke="#b9bbb4" stroke-width=".8"/>
<path d="M125 43 L178 43 L178 44.6 L125 44.6 Z" fill="#c4a63a"/>
<path d="M127.5 16.1 C131 13.5 140 11.6 148.1 10.5 L150.4 11.6 L150.4 33 L130.3 33 Z" fill="#9a2830"/>
<path d="M127.5 16.1 C131 13.5 140 11.6 148.1 10.5 L148.4 12 C140 13 132 15 128.2 17.8 Z" fill="#3a1a20"/>
<path d="M133.8 21 L145.7 18.4 L145.7 22.4 L133.8 24 Z" fill="#9cc4e0"/>
<rect x="131.7" y="28" width="5.6" height="2.8" fill="#a8d0e8"/>
<rect x="140.4" y="27" width="6" height="3.4" fill="#4a3a58"/>
<rect x="150.2" y="12" width="2.4" height="24" fill="#f6efe8"/>
<rect x="127" y="33" width="25.6" height="7.8" fill="#1f2448"/>
<path d="M127.5 34h10.5v1.6h-10.5z M128 37.4h9v1.6h-9z" fill="#b9b048"/>
<rect x="152.8" y="15.4" width="25.2" height="25.6" fill="#a9cde9"/>
<rect x="152.8" y="15.4" width="25.2" height="2.8" fill="#5a98cf"/>
<path d="M159 22h5v3.4h-5z M165.4 22h6.4v3.4h-6.4z" fill="#eef4f8"/>
<rect x="152.8" y="35" width="25.2" height="6" fill="#2a3048"/>
<path d="M162 28.4h12v1.2h-12z" fill="#e8e4dc"/>
<path d="M163 29h1.2v12h-1.2z M173 29h1.2v12h-1.2z M157 35h1v6h-1z M168 35h1v6h-1z" fill="#e6eef4"/></svg><div class="hatch"></div><div class="bt" style="left:9.2px;top:17px;letter-spacing:-.3px">町の情報</div></div>
<div class="abs bn" style="top:410px"><svg class="bp" width="176" height="47" viewBox="2 2 176 47">
<defs><linearGradient id="g6" x1="0" x2="1"><stop offset="0" stop-color="#fff"/><stop offset=".18" stop-color="#fff"/><stop offset=".45" stop-color="#fff" stop-opacity="0"/></linearGradient></defs>
<rect x="2" y="2" width="176" height="48" fill="#b4b6b4"/>
<rect x="2" y="2" width="76" height="48" fill="#c9cbc9"/>
<rect x="78" y="2" width="21.6" height="38.5" fill="#e9e6e0"/>
<circle cx="90" cy="9" r="4.6" fill="none" stroke="#dcc0b0" stroke-width="1.6"/><circle cx="90" cy="22" r="4.6" fill="none" stroke="#dcc0b0" stroke-width="1.6"/><circle cx="92" cy="34" r="4" fill="none" stroke="#e0c8b8" stroke-width="1.4"/>
<rect x="99.6" y="2" width="1.6" height="44" fill="#6a6e72"/>
<rect x="101" y="2" width="46" height="36" fill="#a9aba8"/>
<path d="M101 2h2v34h-2z M117 2h2.4v40h-2.4z M134.2 2h2v36h-2z M143.8 2h2.4v34h-2.4z M125 4h3v22h-3z" fill="#eceeec"/>
<rect x="107" y="2" width="3" height="26" fill="#3e7cc4"/>
<rect x="110.6" y="15" width="7.4" height="20" fill="#d2d6d6"/>
<rect x="100.4" y="24" width="6.2" height="20" fill="#2b90d0"/>
<rect x="126" y="13" width="5" height="22" fill="#c8a8a0"/><rect x="128.4" y="14" width="2.6" height="20" fill="#5a98d0"/>
<rect x="139" y="8" width="3" height="20" fill="#58b890"/>
<rect x="146.6" y="2" width="31.4" height="34" fill="#66604f"/>
<rect x="146.6" y="2" width="31.4" height="6.4" fill="#3e3a34"/>
<rect x="158" y="10" width="20" height="24" fill="#4e4a42"/>
<rect x="170" y="2" width="8" height="48" fill="#2c2a26" opacity=".75"/>
<rect x="149" y="8.6" width="5.4" height="17.4" fill="#c2b224"/>
<path d="M60 41 L100 38 L178 35 L178 50 L60 50 Z" fill="#84847f"/>
<path d="M108 42 L150 37.4 L152 40 L112 46 Z" fill="#c9c9c4"/>
<path d="M150 37 L178 35 L178 50 L140 50 Z" fill="#5a5650"/>
<path d="M62 38 L74 38 L76 50 L62 50 Z" fill="#e8e6e2"/>
<rect x="2" y="2" width="176" height="47" fill="url(#g6)"/></svg><div class="hatch"></div><div class="bt glow" style="left:10.7px;top:8.5px;line-height:17.3px;font-weight:500;font-size:16.3px">町の組織<br>連絡先一覧</div></div>
<div class="abs bn" style="top:471px"><svg class="bp" width="176" height="47" viewBox="2 2 176 47">
<defs><radialGradient id="g7" cx=".56" cy=".55" r=".58"><stop offset=".72" stop-color="#fff" stop-opacity="0"/><stop offset="1" stop-color="#fff"/></radialGradient>
<clipPath id="c7"><rect x="110" y="2" width="39" height="48"/></clipPath></defs>
<g clip-path="url(#c7)">
<rect x="110" y="4" width="39" height="46" fill="#5fa548"/>
<path d="M112 36 L130 34 L138 50 L112 50 Z" fill="#a2d48a"/>
<path d="M116 18 L124 14 L142 36 L134 40 Z" fill="#8cc46e"/>
<path d="M110 26 L114 22 L138 36 L137 42 L112 34 Z" fill="#1c1a2a"/>
<path d="M114 33 L134 41 L133 43.5 L114 37 Z" fill="#2a2838"/>
<path d="M116 28.5 L134 36.8" stroke="#a8a8c0" stroke-width=".9"/>
<path d="M132 24 L146 28 L147 42 L138 44 L134 36 Z" fill="#2a9030"/>
<path d="M131 42 L146 42 L146 50 L131 50 Z" fill="#2f8a34"/>
<ellipse cx="132" cy="15.5" rx="6.4" ry="6.8" fill="#e2aa6a"/><ellipse cx="132.6" cy="15" rx="3" ry="3.4" fill="#f6e6cc"/>
<ellipse cx="141.6" cy="22.5" rx="6.2" ry="6.2" fill="#e4ae6c"/><ellipse cx="142" cy="22.6" rx="2.6" ry="3" fill="#f6e6cc"/>
<path d="M134 5 L140 5 L143 16 L139 17 Z" fill="#6fae58"/>
<rect x="110" y="2" width="39" height="48" fill="url(#g7)"/>
</g>
<rect x="147" y="2" width="31" height="48" fill="#fdfaf4"/>
<circle cx="160.9" cy="12.2" r="11.2" fill="#6b5a32"/><circle cx="160.9" cy="12.2" r="9" fill="#b4baa4"/><path d="M154 9 q7 -6 13 2" stroke="#e6e8dc" stroke-width="1.6" fill="none"/>
<path d="M146.6 24.5 L160.6 24.5 C160 29 157 32.6 153.6 32.6 C150.2 32.6 147.2 29 146.6 24.5 Z" fill="#8a8c3a"/><ellipse cx="153.6" cy="24.8" rx="7" ry="2.6" fill="#56605a"/><ellipse cx="153.6" cy="24.4" rx="5" ry="1.4" fill="#a8b0a0"/>
<path d="M163.4 24.5 L177.4 24.5 C176.8 29 173.8 32.6 170.4 32.6 C167 32.6 164 29 163.4 24.5 Z" fill="#8a8c3a"/><ellipse cx="170.4" cy="24.8" rx="7" ry="2.6" fill="#56605a"/><ellipse cx="170.4" cy="24.4" rx="5" ry="1.4" fill="#a8b0a0"/>
<ellipse cx="156" cy="44" rx="10" ry="9.5" fill="#d9b787"/><ellipse cx="156" cy="44.5" rx="8.4" ry="8" fill="#f3e2c2"/>
<path d="M158 39.6 L170 31.4 L178 35 L178 46 L170.4 50 L166 50 Z" fill="#c9995a"/>
<path d="M160.6 39.4 L170 33.4 L176 36 L167.4 42.4 Z" fill="#f0d8b0"/>
<path d="M167.4 42.4 L176 36 L178 37 L178 46 L170.4 50 Z" fill="#a87844"/></svg><div class="hatch"></div><div class="bt" style="left:8.4px;top:5.5px;line-height:19px;letter-spacing:-.1px"><span style="letter-spacing:-2px">ふるさと</span><br>応援寄附金</div></div>
<div class="abs bn" style="top:532px"><svg class="bp" width="176" height="47" viewBox="2 2 176 47">
<defs><linearGradient id="g8" x1="0" x2="1"><stop offset="0" stop-color="#fff"/><stop offset=".17" stop-color="#fff"/><stop offset=".42" stop-color="#fff" stop-opacity="0"/></linearGradient>
<linearGradient id="s8" x1="0" x2="0" y1="0" y2="1"><stop offset="0" stop-color="#7fabe2"/><stop offset="1" stop-color="#cfe0f2"/></linearGradient></defs>
<rect x="2" y="2" width="176" height="17" fill="url(#s8)"/>
<path d="M2 17 L50 15.4 L74 13.2 L84 14.6 L106 16 L120 14.2 L140 15 L150 13 L166 13.8 L178 12.6 L178 20 L2 20 Z" fill="#566e90"/>
<rect x="2" y="18.4" width="176" height="32" fill="#5a9a30"/>
<path d="M105 17.6 L178 17 L178 22.6 L105 22.6 Z" fill="#3c4c40"/>
<path d="M150 23 L178 22.6 L178 36 L150 33 Z" fill="#4b8a2a"/>
<path d="M158 24.6 L178 24 L178 27 L158 27.6 Z" fill="#6c6c42"/>
<path d="M80 12 L105 11.6 L105 21 L98 23.4 L80 20.4 Z" fill="#2a2220"/>
<path d="M95 12.4 L105 12 L105 21 L99 23 Z" fill="#5a3a28"/>
<path d="M60 22 L96 23.4 L96 38 L60 38 Z" fill="#8a8c80"/>
<path d="M94 23.6 L157.6 23.6 L150 37 L94 37.4 Z" fill="#c9b291"/>
<path d="M94 31 L122 31 L122 38 L94 38 Z" fill="#b8a07e"/>
<path d="M66 37.4 L136 37 L136 42.6 L66 42.6 Z" fill="#34362c"/>
<path d="M92 38.2 L117.6 38.2 L117.6 43.2 L92 43.2 Z" fill="#d6f0ea"/>
<path d="M139.3 45.5 L146.5 30 L163 32 L148.7 46.6 Z" fill="#5c493a"/>
<path d="M150 44.6 L161 33.4 L169.4 35 L169.4 41 L156 45.6 Z" fill="#f1f1ef"/>
<path d="M160 44 L178 38.6 L178 50 L150 50 Z" fill="#3a3c42"/>
<path d="M152 48 L178 40.2 L178 41.4 L154 49 Z" fill="#e8e8e8"/>
<path d="M2 41 L48 39.4 L76 50 L2 50 Z" fill="#70747a"/>
<path d="M48 39.4 L56 39 L82 50 L76 50 Z" fill="#c9b878"/>
<path d="M40 45 L60 50 L40 50 Z" fill="#2c2e34"/>
<rect x="2" y="2" width="176" height="47" fill="url(#g8)"/></svg><div class="hatch"></div><div class="bt glow" style="left:11.4px;top:16.5px;font-weight:500;font-size:16.5px">嘉島町施設一覧</div></div>
<div class="abs bn" style="top:593px"><svg class="bp" width="176" height="47" viewBox="2 2 176 47">
<defs><linearGradient id="g9" x1="0" x2="1"><stop offset="0" stop-color="#fff"/><stop offset=".17" stop-color="#fff"/><stop offset=".36" stop-color="#fff" stop-opacity="0"/></linearGradient></defs>
<rect x="2" y="2" width="176" height="48" fill="#eeeacd"/>
<path d="M108 2 L178 2 L178 40 L160 40 L160 6 L116 9 Z" fill="#4f84d2"/>
<path d="M164 10 L178 8 L178 36 L164 36 Z" fill="#a9c8e8"/>
<path d="M46.7 2.2h17.3v7.2H46.7z M70.5 2.2h21.5v10.6H70.5z M96 7.8h13v10.5H96z" fill="#aeb8b2"/>
<path d="M116.5 8.3 L159.8 3.3 L166.5 17.7 L157.6 12.8 L119.9 15.5 Z" fill="#dadada"/>
<path d="M117 15.6 L157.6 12.8 L165 17.4 L165 24 L117 24 Z" fill="#8b6252"/>
<path d="M117 13h2.4v11H117z M137.4 14.4h2.4v9h-2.4z M157 13h2v10h-2z" fill="#e6e2dc"/>
<path d="M117 23 L172.4 21.6 L172.4 30 L117 31 Z" fill="#4a4040"/>
<rect x="117" y="31" width="48" height="11" fill="#7a5a50"/>
<rect x="122" y="31" width="36" height="10.4" fill="#2a2628"/>
<path d="M124 33.6h32" stroke="#8a7a50" stroke-width=".8"/>
<path d="M116.6 41 L158 41 L158 46.4 L112 46.4 Z" fill="#8c8882"/>
<path d="M40 46 L178 45.4 L178 50 L40 50 Z" fill="#b96a42"/>
<path d="M45 46 L115 45.6 L115 48.6 L45 49 Z" fill="#a2523a"/>
<path d="M50 41 C60 37 70 43 80 40 C92 38 100 41 115 39 L115 46.4 L50 46.8 Z" fill="#3f7e2e"/>
<ellipse cx="163.4" cy="42.6" rx="3.6" ry="3.8" fill="#356e2a"/>
<rect x="168" y="36" width="10" height="5" fill="#2e8a4c"/>
<path d="M64.8 2h1.5v48h-1.5z M87.8 2h1.5v48h-1.5z M103.4 2h1.5v48h-1.5z" fill="#b8b8b6"/>
<path d="M141 48h14v1.2h-14z" fill="#d8b030"/>
<rect x="96.6" y="46" width="3.4" height="3.6" fill="#e8f0ee"/>
<rect x="2" y="2" width="176" height="47" fill="url(#g9)"/></svg><div class="hatch"></div><div class="bt glow" style="left:11.7px;top:16.5px;font-weight:500;font-size:16.6px">公共施設予約</div></div>
<div class="abs box" style="left:1080px;top:664px;width:180px;height:41px"></div>
<div class="abs boxtitle noto" style="left:1090px;top:675.5px;font-weight:500;letter-spacing:.45px">その他のメニュー</div>
<div class="abs om noto" style="top:709px">メールでのお問合せ</div>
<div class="abs om noto" style="top:751px;letter-spacing:-1.4px">サイトマップ</div>
<!--RIGHT-END-->
</body>
</html>
